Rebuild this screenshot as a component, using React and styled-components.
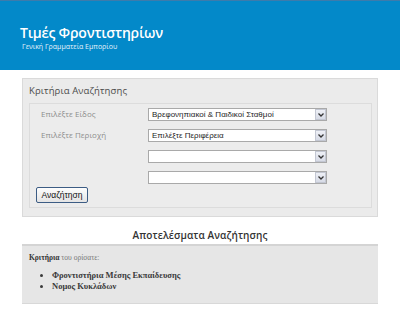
import * as React from 'react';
import styled, { createGlobalStyle } from 'styled-components';

const Global = createGlobalStyle`
  html, body {
    margin: 0;
    padding: 0;
    background: #ffffff;
  }
  body {
    font-family: "DejaVu Sans", Verdana, sans-serif;
  }
`;

const Page = styled.div`
  width: 400px;
  height: 313px;
  overflow: hidden;
  display: flex;
  flex-flow: column;
`;

const Header = styled.div`
  flex: 0 0 70px;
  box-sizing: border-box;
  background: #0389c9;
  border-top: 1px solid #3d7bab;
  padding: 22px 0 0 20px;
  display: flex;
  flex-flow: column;
`;

const Title = styled.div`
  font-family: "Open Sans", sans-serif;
  font-weight: 600;
  font-size: 14px;
  letter-spacing: -0.2px;
  line-height: 19px;
  color: #ffffff;
`;

const Subtitle = styled.div`
  font-family: "Open Sans", sans-serif;
  font-size: 7px;
  line-height: 9px;
  color: #e6f2fa;
  margin-left: 2px;
`;

const Content = styled.div`
  padding: 8px 22px 0 22px;
  display: flex;
  flex-flow: column;
`;

const Panel = styled.div`
  background: #ebebeb;
  border: 1px solid #dadada;
  padding: 0 5px 8px 6px;
  display: flex;
  flex-flow: column;
`;

const PanelTitle = styled.div`
  height: 24px;
  line-height: 24px;
  font-family: "Open Sans", sans-serif;
  font-size: 9.5px;
  letter-spacing: 0.1px;
  color: #4a4a4a;
`;

const Inner = styled.div`
  border: 1px solid #dcdcdc;
  background: #ececec;
  padding: 4px 0 4px 6px;
  display: flex;
  flex-flow: column;
`;

const Grid = styled.div`
  display: grid;
  grid-template-columns: 112px 179px;
  row-gap: 8px;
`;

const Label = styled.div`
  font-family: "Open Sans", sans-serif;
  font-size: 8px;
  line-height: 11px;
  color: #8c8c8c;
  padding-left: 5px;
`;

const Select = styled.div`
  height: 13px;
  box-sizing: border-box;
  border: 1px solid #a9a9a9;
  background: #ffffff;
  display: flex;
  align-items: center;
  justify-content: space-between;
  font-family: "Liberation Sans", Arial, sans-serif;
  font-size: 8px;
  color: #1e1e1e;
  padding-left: 3px;
`;

const Arrow = styled.div`
  width: 11px;
  height: 11px;
  box-sizing: border-box;
  border: 1px solid #c3c7d2;
  background: linear-gradient(#eef0f6, #d7dbe6);
  display: flex;
  align-items: center;
  justify-content: center;
`;

const Button = styled.button`
  margin-top: 3px;
  align-self: flex-start;
  width: 52px;
  height: 16px;
  padding: 0;
  border: 1px solid #3c5c84;
  border-radius: 2px;
  background: linear-gradient(#fdfdfd, #e4e4e4);
  font-family: "Liberation Sans", Arial, sans-serif;
  font-size: 8.5px;
  color: #111;
`;

const ResultsTitle = styled.div`
  margin-top: 10px;
  height: 17px;
  line-height: 17px;
  text-align: center;
  font-family: "Open Sans", sans-serif;
  font-weight: 600;
  font-size: 10px;
  letter-spacing: 0.1px;
  color: #333;
`;

const Results = styled.div`
  height: 60px;
  box-sizing: border-box;
  background: #e6e6e6;
  border-top: 2px solid #d4d4d4;
  border-bottom: 1px solid #d8d8d8;
  padding: 7px 7px 0 7px;
  font-family: "Liberation Serif", "Times New Roman", serif;
  font-size: 7.5px;
  color: #444;
`;

const Criteria = styled.div`
  line-height: 9px;
  color: #777;
  b {
    color: #333;
  }
`;

const List = styled.ul`
  margin: 8px 0 0 0;
  padding-left: 23px;
  list-style: disc;
`;

const Item = styled.li`
  font-weight: bold;
  font-size: 8.5px;
  line-height: 11px;
  color: #3a3a3a;
`;

const Chevron = () => (
  <svg width="6" height="4" viewBox="0 0 6 4">
    <path d="M0.5 0.5 L3 3 L5.5 0.5" stroke="#333" strokeWidth="1.3" fill="none" />
  </svg>
);

function Dropdown({ value }) {
  return (
    <Select>
      <span>{value}</span>
      <Arrow><Chevron /></Arrow>
    </Select>
  );
}

export default function App() {
  return (
    <Page>
      <Global />
      <Header>
        <Title>Τιμές Φροντιστηρίων</Title>
        <Subtitle>Γενική Γραμματεία Εμπορίου</Subtitle>
      </Header>
      <Content>
        <Panel>
          <PanelTitle>Κριτήρια Αναζήτησης</PanelTitle>
          <Inner>
            <Grid>
              <Label>Επιλέξτε Είδος</Label>
              <Dropdown value="Βρεφονηπιακοί & Παιδικοί Σταθμοί" />
              <Label>Επιλέξτε Περιοχή</Label>
              <Dropdown value="Επιλέξτε Περιφέρεια" />
              <div />
              <Dropdown value="" />
              <div />
              <Dropdown value="" />
            </Grid>
            <Button>Αναζήτηση</Button>
          </Inner>
        </Panel>
        <ResultsTitle>Αποτελέσματα Αναζήτησης</ResultsTitle>
        <Results>
          <Criteria><b>Κριτήρια</b> του ορίσατε:</Criteria>
          <List>
            <Item>Φροντιστήρια Μέσης Εκπαίδευσης</Item>
            <Item>Νομος Κυκλάδων</Item>
          </List>
        </Results>
      </Content>
    </Page>
  );
}
